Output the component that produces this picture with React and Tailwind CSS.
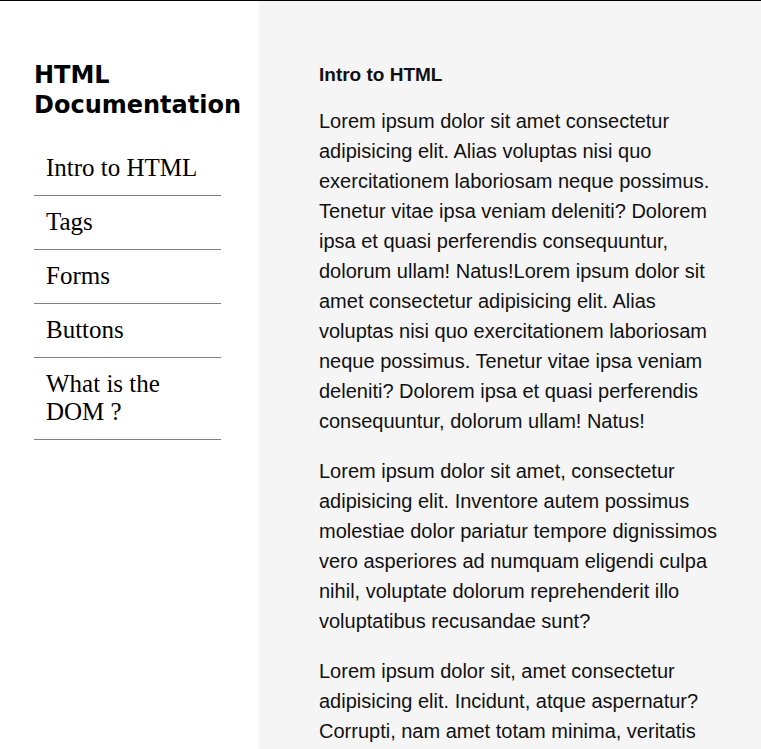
import React from 'react';

const navItems = ['Intro to HTML', 'Tags', 'Forms', 'Buttons', 'What is the DOM ?'];

const paragraphs = [
  'Lorem ipsum dolor sit amet consectetur adipisicing elit. Alias voluptas nisi quo exercitationem laboriosam neque possimus. Tenetur vitae ipsa veniam deleniti? Dolorem ipsa et quasi perferendis consequuntur, dolorum ullam! Natus!Lorem ipsum dolor sit amet consectetur adipisicing elit. Alias voluptas nisi quo exercitationem laboriosam neque possimus. Tenetur vitae ipsa veniam deleniti? Dolorem ipsa et quasi perferendis consequuntur, dolorum ullam! Natus!',
  'Lorem ipsum dolor sit amet, consectetur adipisicing elit. Inventore autem possimus molestiae dolor pariatur tempore dignissimos vero asperiores ad numquam eligendi culpa nihil, voluptate dolorum reprehenderit illo voluptatibus recusandae sunt?',
  'Lorem ipsum dolor sit, amet consectetur adipisicing elit. Incidunt, atque aspernatur? Corrupti, nam amet totam minima, veritatis quas ipsum, quae similique eaque! Nisi, perferendis laudantium. Quod, at error.',
];

const App = () => {
  return (
    <div className="flex h-[749px] overflow-hidden border-t border-black text-black">
      <nav className="w-[259px] shrink-0 bg-white pt-[59px] pl-[34px]">
        <header className="text-[24px] leading-[30px] font-bold font-['DejaVu_Sans',sans-serif]">
          HTML Documentation
        </header>
        <ul className="mt-[22px] w-[187px] font-['Liberation_Serif',serif] text-[25px] leading-[28px]">
          {navItems.map((item) => (
            <li key={item} className="border-b border-[#808080] pl-3 pr-4 pt-3 pb-[13px]">
              <a href="#">{item}</a>
            </li>
          ))}
        </ul>
      </nav>
      <main className="flex-1 bg-[#f5f5f5] pt-[59px] pl-[60px] pr-[30px] font-['Liberation_Sans',Arial,sans-serif] text-[#111]">
        <section>
          <header className="text-[19px] leading-[30px] font-bold">Intro to HTML</header>
          {paragraphs.map((p, i) => (
            <p key={i} className="mt-4 mb-5 text-[20px] leading-[30px]">
              {p}
            </p>
          ))}
        </section>
      </main>
    </div>
  );
};

export default App;
